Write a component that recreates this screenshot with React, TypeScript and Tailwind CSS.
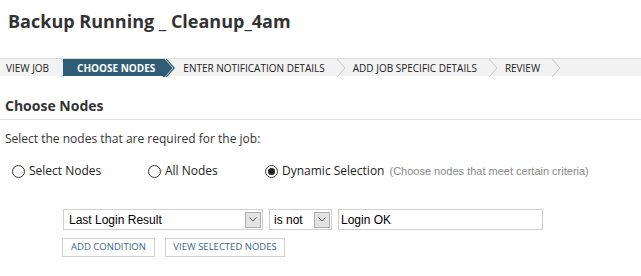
import React from "react";

const Chevron = ({ dark }: { dark?: boolean }) => (
  <svg width="14" height="18" viewBox="0 0 14 18" className="shrink-0">
    {dark ? (
      <polygon points="0,0 4,0 12,9 4,18 0,18" fill="#2e5d75" />
    ) : null}
    <polyline points="2,0 10,9 2,18" fill="none" stroke="#c8c8c8" strokeWidth="1" />
  </svg>
);

const Radio = ({ checked }: { checked?: boolean }) => (
  <span className="inline-flex w-[13px] h-[13px] rounded-full border border-[#333] items-center justify-center bg-white shrink-0">
    {checked ? <span className="w-[7px] h-[7px] rounded-full bg-[#222]" /> : null}
  </span>
);

const SelectArrow = () => (
  <span className="w-[16px] h-[16px] mr-[1px] bg-[#e3e3e3] border border-[#adadad] flex items-center justify-center">
    <svg width="8" height="5" viewBox="0 0 8 5">
      <polyline points="0.5,0.5 4,4 7.5,0.5" fill="none" stroke="#555" strokeWidth="1" />
    </svg>
  </span>
);

export default function App() {
  return (
    <div className="w-[641px] h-[276px] bg-white text-[#222] overflow-hidden" style={{ fontFamily: "'Open Sans', sans-serif" }}>
      <div className="pl-[8px] pt-[9px] h-[58px]">
        <h1 className="text-[18px] font-bold text-[#333] leading-[24px]">Backup Running _ Cleanup_4am</h1>
      </div>
      <div className="flex items-center h-[18px] bg-[#f2f2f2] border-t border-[#dcdcdc] text-[10px] text-[#222] leading-none">
        <span className="pl-[6px] pr-[10px]">VIEW JOB</span>
        <Chevron />
        <span className="bg-[#2e5d75] text-white font-bold h-full flex items-center pl-[2px] pr-[8px] -ml-[10px]">
          <span className="pl-[12px]">CHOOSE NODES</span>
        </span>
        <Chevron dark />
        <span className="pl-[6px] pr-[10px]">ENTER NOTIFICATION DETAILS</span>
        <Chevron />
        <span className="pl-[4px] pr-[10px]">ADD JOB SPECIFIC DETAILS</span>
        <Chevron />
        <span className="pl-[4px] pr-[10px]">REVIEW</span>
        <Chevron />
      </div>
      <div className="pt-[20px] px-[5px]">
        <h2 className="text-[14px] font-bold text-[#333] leading-[20px]">Choose Nodes</h2>
      </div>
      <div className="mt-[3px] border-t border-[#e3e3e3]" />
      <p className="px-[5px] pt-[11px] text-[12px] leading-[16px] text-[#333]">Select the nodes that are required for the job:</p>
      <div className="flex items-center pl-[12px] mt-[16px] text-[12px] text-[#222] h-[16px]">
        <div className="flex items-center gap-[4px] w-[136px]">
          <Radio />
          <span>Select Nodes</span>
        </div>
        <div className="flex items-center gap-[4px] w-[117px]">
          <Radio />
          <span>All Nodes</span>
        </div>
        <div className="flex items-center gap-[4px]">
          <Radio checked />
          <span>Dynamic Selection</span>
          <span className="text-[11px] text-[#888] pl-[1px]" style={{ fontFamily: "'Liberation Sans', Arial, sans-serif" }}>(Choose nodes that meet certain criteria)</span>
        </div>
      </div>
      <div className="flex items-center pl-[63px] mt-[30px] gap-[6px] text-[12px] text-black" style={{ fontFamily: "'Liberation Sans', Arial, sans-serif" }}>
        <div className="w-[200px] h-[21px] border border-[#cfcfcf] flex items-center justify-between">
          <span className="pl-[5px]">Last Login Result</span>
          <SelectArrow />
        </div>
        <div className="w-[63px] h-[21px] border border-[#cfcfcf] flex items-center justify-between">
          <span className="pl-[4px]">is not</span>
          <SelectArrow />
        </div>
        <div className="w-[205px] h-[21px] border border-[#cfcfcf] flex items-center">
          <span className="pl-[2px]">Login OK</span>
        </div>
      </div>
      <div className="flex items-center pl-[62px] mt-[8px] gap-[10px] text-[9.5px] text-[#3d6785]">
        <button className="h-[19px] w-[93px] border border-[#cfcfcf] bg-white flex items-center justify-center">ADD CONDITION</button>
        <button className="h-[19px] w-[120px] border border-[#cfcfcf] bg-white flex items-center justify-center">VIEW SELECTED NODES</button>
      </div>
    </div>
  );
}
